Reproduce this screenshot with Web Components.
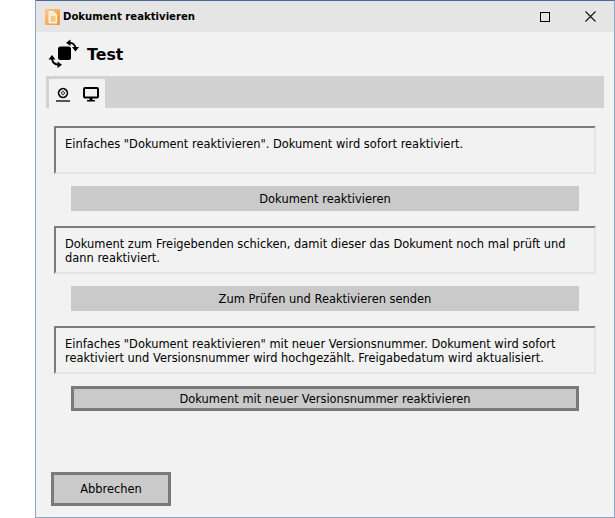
<!DOCTYPE html>
<html>
<head>
<meta charset="utf-8">
<title>Dokument reaktivieren</title>
<style>
html, body { margin: 0; padding: 0; background: #fff; height: 518px; overflow: hidden; }
body { font-family: "DejaVu Sans", sans-serif; font-size: 11.45px; color: #000; padding-left: 35px; box-sizing: border-box; }
</style>
</head>
<body>
<dialog-window caption="Dokument reaktivieren">
	<dialog-heading>Test</dialog-heading>
	<tool-bar></tool-bar>
	<action-box>Einfaches "Dokument reaktivieren". Dokument wird sofort reaktiviert.</action-box>
	<action-button>Dokument reaktivieren</action-button>
	<action-box>Dokument zum Freigebenden schicken, damit dieser das Dokument noch mal prüft und dann reaktiviert.</action-box>
	<action-button>Zum Prüfen und Reaktivieren senden</action-button>
	<action-box>Einfaches "Dokument reaktivieren" mit neuer Versionsnummer. Dokument wird sofort reaktiviert und Versionsnummer wird hochgezählt. Freigabedatum wird aktualisiert.</action-box>
	<action-button focused>Dokument mit neuer Versionsnummer reaktivieren</action-button>
	<cancel-button>Abbrechen</cancel-button>
</dialog-window>

<script>
const windowTemplate = document.createElement('template');
windowTemplate.innerHTML = `
<style>
:host { display: flex; flex-direction: column; width: 580px; height: 518px; box-sizing: border-box;
	border: 1px solid #8ea6c8; border-top: 1px solid #4a6a9c; background: #f2f2f2; }
#bar { display: flex; align-items: center; height: 31px; flex: none; background: #e5e5e5; padding-left: 9px; }
#icon { width: 15px; height: 16px; margin-right: 3px; }
#caption { font-weight: bold; flex: 1; font-size: 10.15px; }
.btn { width: 46px; height: 31px; display: flex; align-items: center; justify-content: center; }
#content { flex: 1; display: flex; flex-direction: column; padding: 0 10px 11px 10px; }
</style>
<div id="bar">
	<svg id="icon" viewBox="0 0 15 16">
		<defs><linearGradient id="g" x1="0" y1="0" x2="1" y2="1"><stop offset="0" stop-color="#fcc88c"/><stop offset="1" stop-color="#f29530"/></linearGradient></defs>
		<rect width="15" height="16" fill="url(#g)"/>
		<path d="M4 2.500h4.500l3 3v8.500h-7.500z" fill="#fde9cf" stroke="#fff" stroke-width=".8"/>
		<path d="M5.500 8h5M5.500 10h5M5.500 12h5" stroke="#f2a550"/>
	</svg>
	<span id="caption"></span>
	<div class="btn" style="width:45px;padding-left:1px"><svg width="10" height="10" viewBox="0 0 10 10"><rect x=".5" y=".5" width="9" height="9" fill="none" stroke="#000"/></svg></div>
	<div class="btn" style="width:47px"><svg width="11" height="11" viewBox="0 0 11 11"><path d="M.5 .5l10 10M10.500 .5l-10 10" stroke="#111" stroke-width="1.100"/></svg></div>
</div>
<div id="content"><slot></slot></div>`;

class DialogWindow extends HTMLElement {
	constructor() {
		super();
		this.attachShadow({ mode: 'open' });
		this.shadowRoot.appendChild(windowTemplate.content.cloneNode(true));
	}
	connectedCallback() {
		this.shadowRoot.getElementById('caption').textContent = this.getAttribute('caption');
	}
}
customElements.define('dialog-window', DialogWindow);

const headingTemplate = document.createElement('template');
headingTemplate.innerHTML = `
<style>
:host { display: flex; align-items: center; height: 44px; padding-left: 4px; }
svg { width: 28px; height: 30px; margin-right: 9px; overflow: visible; }
span { font-size: 15.8px; font-weight: bold; margin-top: 1px; }
</style>
<svg viewBox="0 0 28 30">
	<rect x="8" y="7.500" width="13" height="13.500" rx="2.500" fill="#000"/>
	<g fill="none" stroke="#000" stroke-width="1.800">
		<path d="M19.500 3.800c3 0 5.500 2 6 5"/>
		<path d="M2 20c.5 3 3 5.500 6.500 5.700"/>
	</g>
	<path d="M20.500 .5v6.500l-4.500-3.200zM22 8h7l-3.500 4.500zM-1.500 20.500h7l-3.500-4.500zM7.500 22.500v6.500l4.500-3.200z" fill="#000"/>
</svg>
<span><slot></slot></span>`;

class DialogHeading extends HTMLElement {
	constructor() {
		super();
		this.attachShadow({ mode: 'open' });
		this.shadowRoot.appendChild(headingTemplate.content.cloneNode(true));
	}
}
customElements.define('dialog-heading', DialogHeading);

const toolbarTemplate = document.createElement('template');
toolbarTemplate.innerHTML = `
<style>
:host { display: flex; height: 32px; box-sizing: border-box; background: #d2d2d2; padding: 3px 0 0 3px; margin-bottom: 18px; }
#tabs { display: flex; align-items: center; gap: 13px; width: 56px; box-sizing: border-box; padding: 2px 0 0 7px; background: #f2f2f2; }
svg { display: block; }
</style>
<div id="tabs">
	<svg width="14" height="16" viewBox="0 0 14 16">
		<circle cx="7" cy="6" r="4.300" fill="none" stroke="#111" stroke-width="1.900"/>
		<circle cx="7" cy="6" r="1.500" fill="#f2f2f2" stroke="#333"/>
		<path d="M7 2v1.500M7 8.500v1.500M3 6h1.500M9.500 6h1.500" stroke="#bbb" stroke-width="1.500"/>
		<path d="M0 14h14" stroke="#111" stroke-width="1.400"/>
	</svg>
	<svg width="16" height="15" viewBox="0 0 16 15">
		<rect x="1" y="1" width="14" height="9.500" rx="1" fill="none" stroke="#000" stroke-width="2"/>
		<path d="M6.500 11h3v2h-3zM4 13h8v1.500h-8z" fill="#000"/>
	</svg>
</div>`;

class ToolBar extends HTMLElement {
	constructor() {
		super();
		this.attachShadow({ mode: 'open' });
		this.shadowRoot.appendChild(toolbarTemplate.content.cloneNode(true));
	}
}
customElements.define('tool-bar', ToolBar);

const boxTemplate = document.createElement('template');
boxTemplate.innerHTML = `
<style>
:host { display: block; height: 48px; box-sizing: border-box; margin: 0 8px 12px 8px;
	border: 2px solid #e4e4e4; border-top-color: #7c7c7c; border-left-color: #7c7c7c; padding: 9px 9px 0 9px; line-height: 14px; }
</style>
<slot></slot>`;

class ActionBox extends HTMLElement {
	constructor() {
		super();
		this.attachShadow({ mode: 'open' });
		this.shadowRoot.appendChild(boxTemplate.content.cloneNode(true));
	}
}
customElements.define('action-box', ActionBox);

const buttonTemplate = document.createElement('template');
buttonTemplate.innerHTML = `
<style>
:host { display: flex; align-items: center; justify-content: center; height: 25px; box-sizing: border-box;
	margin: 0 25px 15px 25px; background: #cacaca; }
:host([focused]) { border: 3px solid #7a7a7a; }
</style>
<slot></slot>`;

class ActionButton extends HTMLElement {
	constructor() {
		super();
		this.attachShadow({ mode: 'open' });
		this.shadowRoot.appendChild(buttonTemplate.content.cloneNode(true));
	}
}
customElements.define('action-button', ActionButton);

const cancelTemplate = document.createElement('template');
cancelTemplate.innerHTML = `
<style>
:host { display: flex; align-items: center; justify-content: center; width: 120px; height: 34px; box-sizing: border-box;
	margin: auto 0 0 5px; background: #cacaca; border: 3px solid #7a7a7a; }
</style>
<slot></slot>`;

class CancelButton extends HTMLElement {
	constructor() {
		super();
		this.attachShadow({ mode: 'open' });
		this.shadowRoot.appendChild(cancelTemplate.content.cloneNode(true));
	}
}
customElements.define('cancel-button', CancelButton);
</script>
</body>
</html>
